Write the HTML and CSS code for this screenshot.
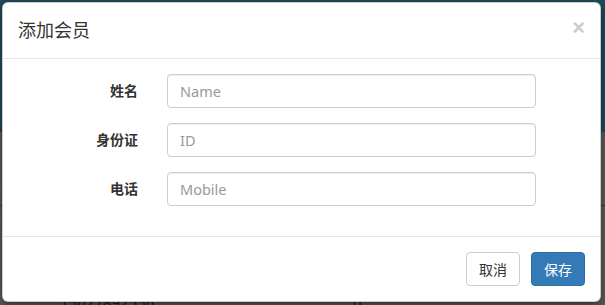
FILE: index.html
```html
<!DOCTYPE html>
<html lang="zh-CN">
<head>
    <meta charset="UTF-8">
    <meta name="viewport" content="width=device-width, initial-scale=1.0">
    <title>会员管理</title>
    <link rel="stylesheet" href="styles.css">
</head>
<body>
    <div class="page">
        <div class="navbar"></div>
        <div class="table">
            <div class="row-line first"></div>
            <div class="row-line dark"></div>
            <div class="row-line"></div>
            <div class="table-row">
                <span class="cell-phone">15027892556</span>
                <span class="cell-num">0</span>
            </div>
        </div>
    </div>

    <div class="modal">
        <div class="modal-header">
            <h4 class="modal-title">添加会员</h4>
            <button class="close" type="button">&times;</button>
        </div>
        <div class="modal-body">
            <div class="form-group">
                <label for="name">姓名</label>
                <input type="text" id="name" placeholder="Name">
            </div>
            <div class="form-group">
                <label for="idcard">身份证</label>
                <input type="text" id="idcard" placeholder="ID">
            </div>
            <div class="form-group">
                <label for="mobile">电话</label>
                <input type="text" id="mobile" placeholder="Mobile">
            </div>
        </div>
        <div class="modal-footer">
            <button class="btn btn-default" type="button">取消</button>
            <button class="btn btn-primary" type="button">保存</button>
        </div>
    </div>
</body>
</html>
```
FILE: styles.css
```css
body {
    margin: 0;
    font-family: "Noto Sans", "Noto Sans CJK SC", sans-serif;
    font-size: 14px;
    color: #333;
    overflow: hidden;
}
.page { /* fondo ya oscurecido */
    height: 305px;
    background-color: #5b5b5b;
}
.navbar {
    height: 132px;
    background-color: #1f4b5c;
}
.row-line {
    height: 1px;
    margin-top: 10px;
    background-color: #636363;
}
.row-line.first {
    margin-top: 55px;
}
.row-line.dark {
    margin-top: 17px;
    background-color: #3a3a3a;
}
.table-row {
    display: flex;
    padding-top: 75px;
    font-size: 15px;
    line-height: 20px;
    color: #1c1c1c;
}
.cell-phone {
    margin-left: 60px;
    width: 293px;
}
.modal { /* dialogo encima del fondo */
    position: absolute;
    top: 2px;
    left: 2px;
    width: 597px;
    background-color: #fff;
    border: 1px solid rgba(0, 0, 0, 0.2);
    border-radius: 6px;
    box-shadow: 0 3px 9px rgba(0, 0, 0, 0.5);
}
.modal-header {
    display: flex;
    justify-content: space-between;
    align-items: flex-start;
    padding: 15px;
    border-bottom: 1px solid #e5e5e5;
}
.modal-title {
    margin: 0;
    font-size: 18px;
    font-weight: 400;
    line-height: 25px;
    color: #333;
}
.close {
    padding: 0;
    margin-top: -1px;
    border: 0;
    background: none;
    font-family: "Liberation Sans", sans-serif;
    font-size: 22px;
    font-weight: bold;
    line-height: 1;
    color: #000;
    opacity: 0.2;
}
.modal-body {
    padding: 15px;
}
.form-group { /* etiqueta a la izquierda, campo a la derecha */
    display: grid;
    grid-template-columns: 120px 369px;
    column-gap: 29px;
    margin-bottom: 15px;
}
.form-group label {
    padding-top: 6px;
    text-align: right;
    font-weight: bold;
    color: #333;
}
.form-group input {
    box-sizing: border-box;
    height: 34px;
    padding: 6px 12px;
    border: 1px solid #ccc;
    border-radius: 4px;
    box-shadow: inset 0 1px 1px rgba(0, 0, 0, 0.075);
    font-family: "Noto Sans", sans-serif;
    font-size: 14.5px;
    color: #555;
}
.form-group input::placeholder {
    color: #999;
}
.modal-footer {
    display: flex;
    justify-content: flex-end;
    gap: 11px;
    padding: 15px;
    border-top: 1px solid #e5e5e5;
}
.btn {
    width: 54px;
    height: 34px;
    padding: 6px 0;
    border: 1px solid transparent;
    border-radius: 4px;
    font-family: "Noto Sans CJK SC", sans-serif;
    font-size: 14px;
    line-height: 20px;
}
.btn-default {
    background-color: #fff;
    border-color: #ccc;
    color: #333;
}
.btn-primary {
    background-color: #337ab7;
    border-color: #2e6da4;
    color: #fff;
}
```
